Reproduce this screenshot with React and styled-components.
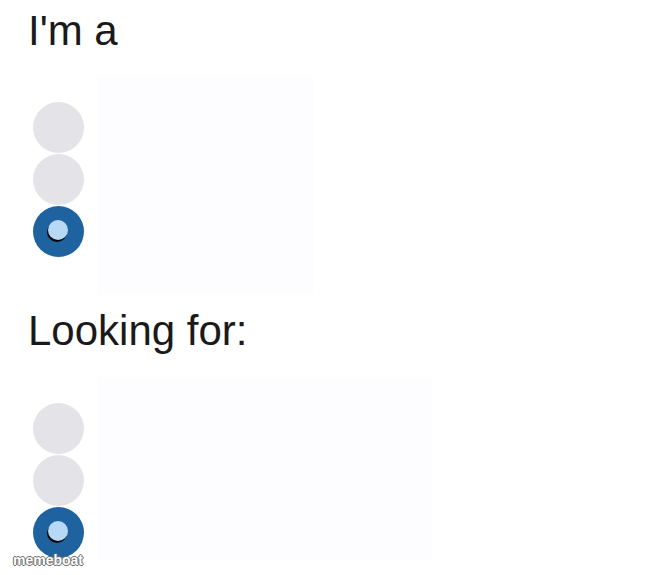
import React from "react";
import styled, { createGlobalStyle } from "styled-components";

const GlobalStyle = createGlobalStyle`
  html, body {
    min-height: 575px;
  }
  body {
    margin: 8px;
    background: #ffffff;
    font-family: "Liberation Sans", Arial, sans-serif;
  }
`;

const Page = styled.div`
  position: relative;
  min-height: 567px;
  padding-left: 20px;
  display: flex;
  flex-direction: column;
  align-items: flex-start;
`;

const Heading = styled.h2`
  margin: ${(p) => p.$top}px 0 0 0;
  font-size: 42px;
  font-weight: 400;
  line-height: 46px;
  color: #1a1a1a;
`;

const Row = styled.div`
  display: flex;
  align-items: flex-start;
  gap: 13px;
  margin-top: ${(p) => p.$top}px;
  padding-left: 5px;
`;

const Options = styled.div`
  display: flex;
  flex-direction: column;
  gap: 1px;
  padding-top: 26px;
`;

const Radio = styled.div`
  width: 51px;
  height: 51px;
  border-radius: 50%;
  background: ${(p) => (p.$checked ? "#1e63a0" : "#e4e4e8")};
  display: flex;
  align-items: center;
  justify-content: center;
`;

const Dot = styled.span`
  width: 20px;
  height: 20px;
  border-radius: 50%;
  background: #b7d9f6;
  box-shadow: -1px 2px 0 #050505;
  transform: translate(-1px, -2px);
`;

const Panel = styled.div`
  width: ${(p) => p.$w}px;
  height: ${(p) => p.$h}px;
  background: #fdfcff;
`;

const Watermark = styled.span`
  position: absolute;
  left: 5px;
  top: 544px;
  font-size: 14px;
  font-weight: 700;
  color: #ffffff;
  text-shadow: 1px 0 0 #6b6b6b, -1px 0 0 #6b6b6b, 0 1px 0 #6b6b6b,
    0 -1px 0 #6b6b6b;
`;

function Group({ label, top, rowTop, w, h }) {
  return (
    <>
      <Heading $top={top}>{label}</Heading>
      <Row $top={rowTop}>
        <Options>
          <Radio />
          <Radio />
          <Radio $checked>
            <Dot />
          </Radio>
        </Options>
        <Panel $w={w} $h={h} />
      </Row>
    </>
  );
}

export default function App() {
  return (
    <>
      <GlobalStyle />
      <Page>
        <Group label="I'm a" top={0} rowTop={22} w={216} h={219} />
        <Group label="Looking for:" top={13} rowTop={23} w={335} h={183} />
        <Watermark>memeboat</Watermark>
      </Page>
    </>
  );
}
